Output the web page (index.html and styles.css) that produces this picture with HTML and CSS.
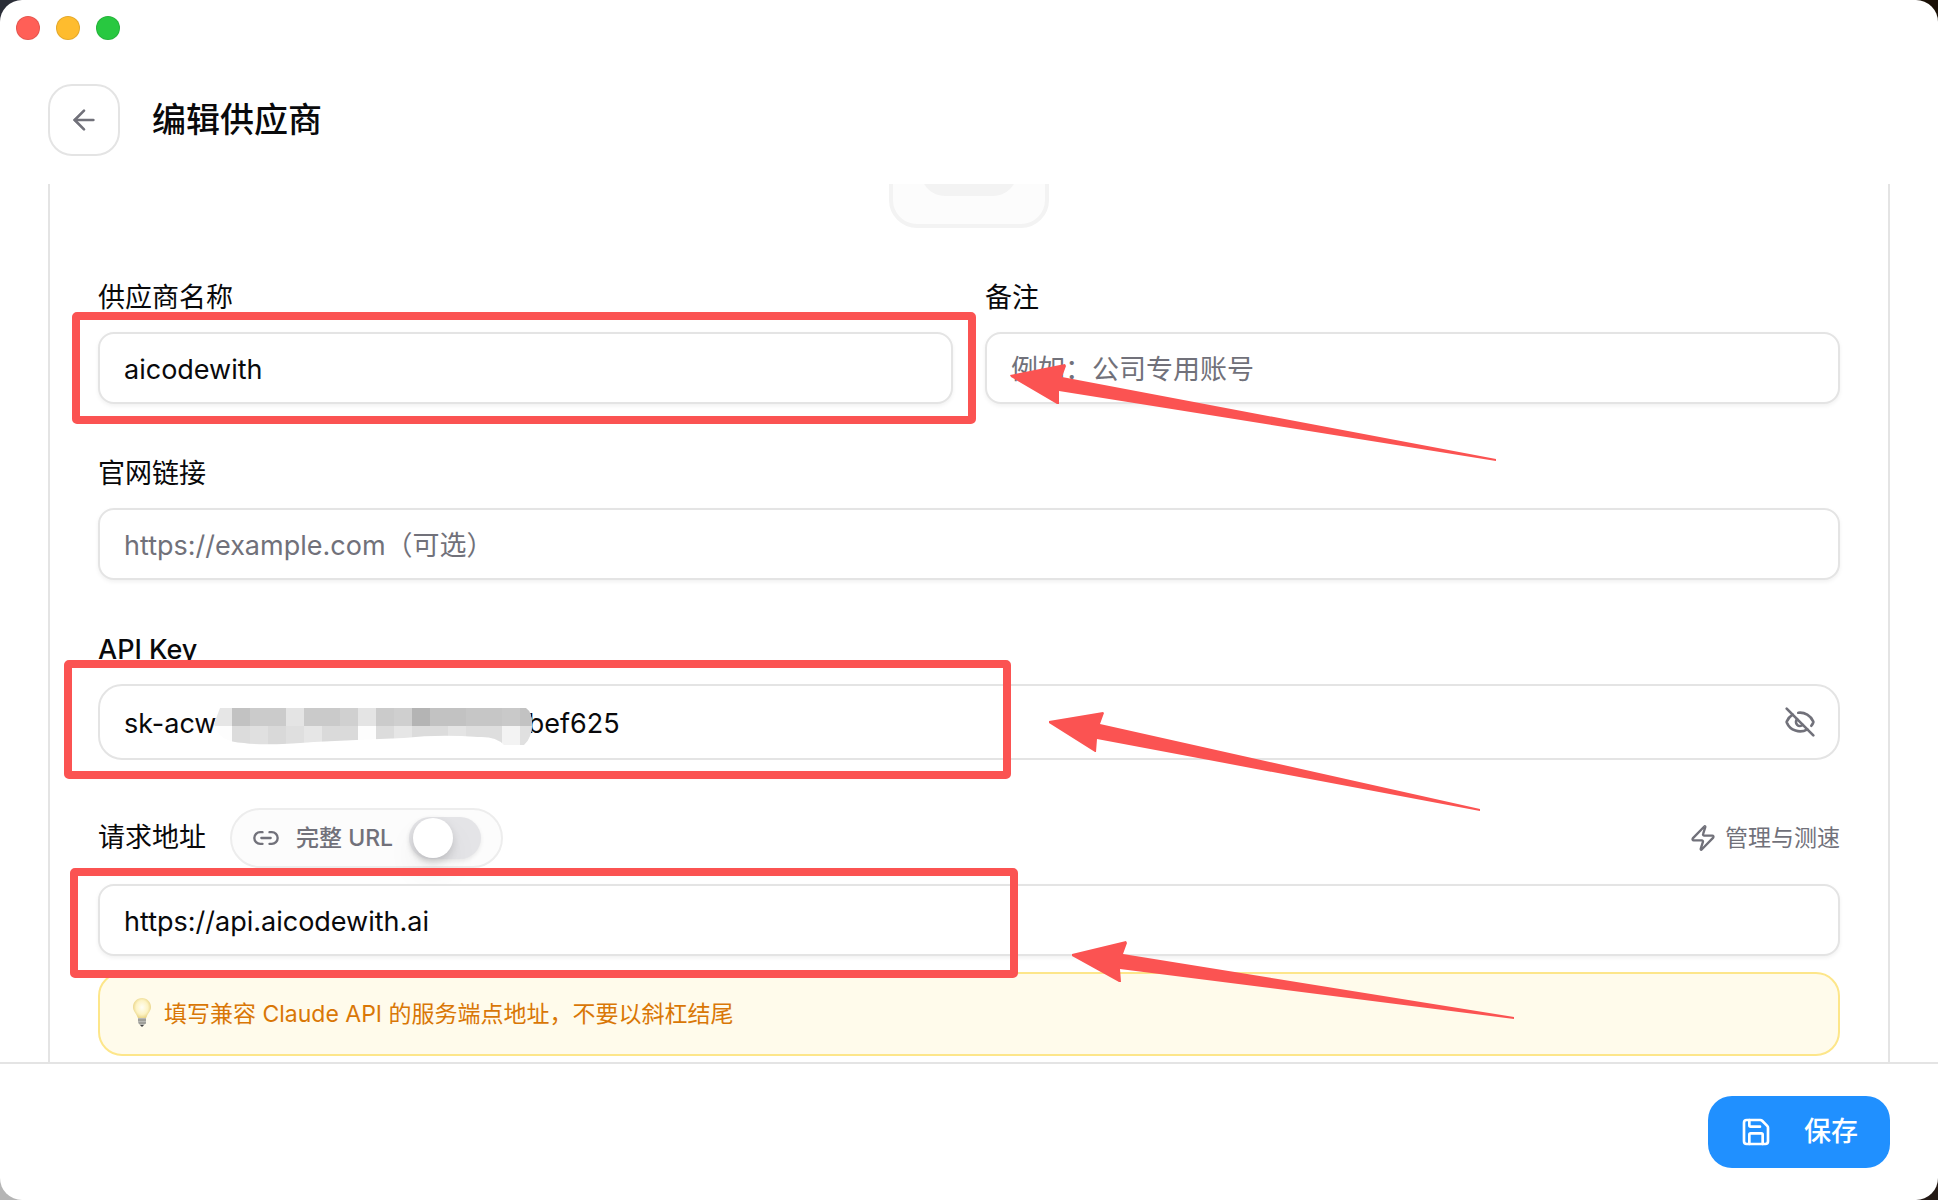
FILE: index.html
```html
<!DOCTYPE html>
<html lang="zh-CN">
<head>
    <meta charset="UTF-8">
    <title>编辑供应商</title>
    <meta name="viewport" content="width=device-width, initial-scale=1">
    <link rel="stylesheet" href="styles.css">
</head>
<body>
<div class="window">
    <div class="titlebar">
        <span class="dot dot-close"></span>
        <span class="dot dot-min"></span>
        <span class="dot dot-max"></span>
    </div>

    <header class="header">
        <button type="button" class="back" aria-label="返回">
            <svg class="icon" viewBox="0 0 24 24"><path d="m12 19-7-7 7-7"/><path d="M19 12H5"/></svg>
        </button>
        <h1>编辑供应商</h1>
    </header>

    <main class="content">
        <form class="panel" id="providerForm">
            <div class="avatar"><div class="avatar-inner"></div></div>

            <div class="columns">
                <div class="field">
                    <label for="name">供应商名称</label>
                    <input type="text" id="name" value="aicodewith">
                </div>
                <div class="field">
                    <label for="note">备注</label>
                    <input type="text" id="note" placeholder="例如：公司专用账号">
                </div>
            </div>

            <div class="field">
                <label for="site">官网链接</label>
                <input type="text" id="site" placeholder="https://example.com（可选）">
            </div>

            <div class="field">
                <label for="apiKey" class="label-latin">API Key</label>
                <div class="key-box">
                    <input type="text" id="apiKey" class="key-input" value="sk-acw                                         bef625">
                    <!-- blurred middle part of the key -->
                    <svg class="mosaic" viewBox="0 0 322 38" width="322" height="38">
                        <clipPath id="brush"><path d="M6 0H312Q318 4 318 16Q318 30 310 37H290Q282 28 264 29Q225 26 190 30Q140 32 100 34Q50 38 30 35Q4 34 0 16Z"/></clipPath>
                        <g clip-path="url(#brush)" shape-rendering="crispEdges">
                            <rect width="322" height="38" fill="#fdfdfd"/>
                            <rect x="0" width="18" height="18" fill="#e6e6e6"/>
                            <rect x="18" width="18" height="18" fill="#c2c2c2"/>
                            <rect x="36" width="36" height="18" fill="#cbcbcb"/>
                            <rect x="72" width="18" height="18" fill="#e4e4e4"/>
                            <rect x="90" width="36" height="18" fill="#cacaca"/>
                            <rect x="126" width="18" height="18" fill="#d0d0d0"/>
                            <rect x="144" width="18" height="18" fill="#e4e4e4"/>
                            <rect x="162" width="18" height="18" fill="#cbcbcb"/>
                            <rect x="180" width="18" height="18" fill="#cfcfcf"/>
                            <rect x="198" width="18" height="18" fill="#b4b4b4"/>
                            <rect x="216" width="36" height="18" fill="#c2c2c2"/>
                            <rect x="252" width="36" height="18" fill="#c6c6c6"/>
                            <rect x="288" width="18" height="18" fill="#c9c9c9"/>
                            <rect x="306" width="16" height="18" fill="#c2c2c2"/>
                            <rect x="18" y="18" width="18" height="20" fill="#dcdcdc"/>
                            <rect x="36" y="18" width="18" height="20" fill="#e0e0e0"/>
                            <rect x="54" y="18" width="18" height="20" fill="#d9d9d9"/>
                            <rect x="72" y="18" width="18" height="20" fill="#dfdfdf"/>
                            <rect x="90" y="18" width="18" height="20" fill="#e6e6e6"/>
                            <rect x="108" y="18" width="36" height="20" fill="#dadada"/>
                            <rect x="162" y="18" width="18" height="20" fill="#dcdcdc"/>
                            <rect x="180" y="18" width="18" height="20" fill="#e6e6e6"/>
                            <rect x="198" y="18" width="36" height="20" fill="#dcdcdc"/>
                            <rect x="234" y="18" width="18" height="20" fill="#e4e4e4"/>
                            <rect x="252" y="18" width="36" height="20" fill="#dedede"/>
                            <rect x="288" y="18" width="18" height="20" fill="#f3f3f3"/>
                            <rect x="306" y="18" width="16" height="20" fill="#e0e0e0"/>
                        </g>
                    </svg>
                    <button type="button" class="eye" aria-label="显示或隐藏 API Key">
                        <svg class="icon" viewBox="0 0 24 24"><path d="M10.733 5.076a10.744 10.744 0 0 1 11.205 6.575 1 1 0 0 1 0 .696 10.747 10.747 0 0 1-1.444 2.49"/><path d="M14.084 14.158a3 3 0 0 1-4.242-4.242"/><path d="M17.479 17.499a10.75 10.75 0 0 1-15.417-5.151 1 1 0 0 1 0-.696 10.75 10.75 0 0 1 4.446-5.143"/><path d="m2 2 20 20"/></svg>
                    </button>
                </div>
            </div>

            <div class="field field-url">
                <div class="url-row">
                    <label for="baseUrl">请求地址</label>
                    <label class="pill" for="fullUrl">
                        <svg class="icon icon-sm" viewBox="0 0 24 24"><path d="M9 17H7A5 5 0 0 1 7 7h2"/><path d="M15 7h2a5 5 0 1 1 0 10h-2"/><path d="M8 12h8"/></svg>
                        <span>完整 URL</span>
                        <input type="checkbox" id="fullUrl" class="switch">
                    </label>
                    <button type="button" class="speed">
                        <svg class="icon icon-sm" viewBox="0 0 24 24"><path d="M4 14a1 1 0 0 1-.78-1.63l9.9-10.2a.5.5 0 0 1 .86.46l-1.92 6.02A1 1 0 0 0 13 10h7a1 1 0 0 1 .78 1.63l-9.9 10.2a.5.5 0 0 1-.86-.46l1.92-6.02A1 1 0 0 0 11 14z"/></svg>
                        <span>管理与测速</span>
                    </button>
                </div>
                <input type="text" id="baseUrl" value="https://api.aicodewith.ai">
                <div class="hint">
                    <svg class="bulb" viewBox="0 0 20 30" width="20" height="30">
                        <defs>
                            <radialGradient id="glass" cx="50%" cy="45%" r="55%">
                                <stop offset="0" stop-color="#fffef4"/>
                                <stop offset="0.6" stop-color="#fdf3c4"/>
                                <stop offset="1" stop-color="#e6cf7c"/>
                            </radialGradient>
                        </defs>
                        <path d="M10 1C5 1 1 5 1 10c0 4 3 6 4 9 1 2 1 3 2 3h6c1 0 1-1 2-3 1-3 4-5 4-9 0-5-4-9-9-9z" fill="url(#glass)"/>
                        <path d="M6 21h8v5l-2 2-2 1-2-1-2-2z" fill="#b9b9b5"/>
                        <path d="M6 23h8M7 26h7" stroke="#85857f"/>
                        <path d="M8 28h4l-2 2z" fill="#444"/>
                    </svg>
                    <p>填写兼容 Claude API 的服务端点地址，不要以斜杠结尾</p>
                </div>
            </div>
        </form>
    </main>

    <footer class="footer">
        <button type="submit" form="providerForm" class="save">
            <svg class="icon" viewBox="0 0 24 24"><path d="M15.2 3a2 2 0 0 1 1.4.6l3.8 3.8a2 2 0 0 1 .6 1.4V19a2 2 0 0 1-2 2H5a2 2 0 0 1-2-2V5a2 2 0 0 1 2-2z"/><path d="M17 21v-7a1 1 0 0 0-1-1H8a1 1 0 0 0-1 1v7"/><path d="M7 3v4a1 1 0 0 0 1 1h7"/></svg>
            <span>保存</span>
        </button>
    </footer>
</div>

<!-- red frames and arrows drawn over the form -->
<svg class="marks" viewBox="0 0 1938 1200" preserveAspectRatio="xMidYMin meet">
    <rect x="76" y="316" width="896" height="104" rx="1"/>
    <rect x="68" y="664" width="939" height="111" rx="1"/>
    <rect x="74" y="872" width="940" height="102" rx="1"/>
    <path d="M1010 375 1065 364 1066 366 1062 377 1496 459V461L1059 391V404H1057L1011 377Z"/>
    <path d="M1049 721 1103 712 1104 713 1100 724 1480 809V811L1097 739 1096 752H1095L1049 723Z"/>
    <path d="M1072 954 1126 941 1127 943 1123 954 1514 1017V1019L1120 969 1121 982H1119L1072 956Z"/>
</svg>
</body>
</html>
```
FILE: styles.css
```css
* {
    box-sizing: border-box;
}

body {
    margin: 0;
    font-family: Inter, "Noto Sans CJK SC", sans-serif;
    font-size: 27px;
    color: #09090b;
    /* desktop showing behind the rounded corners */
    background-image: linear-gradient(#2b2e38, #2b2e38), linear-gradient(#1a1006, #1a1006), linear-gradient(#b5b5b5, #b5b5b5), linear-gradient(#241a16, #241a16);
    background-size: 50% 50%;
    background-position: 0 0, 100% 0, 0 100%, 100% 100%;
    background-repeat: no-repeat;
}

.window {
    display: flex;
    flex-direction: column;
    height: 100vh;
    background-color: #fff;
    border-radius: 22px;
    overflow: hidden;
}

.titlebar {
    display: flex;
    gap: 16px;
    height: 84px;
    padding: 16px;
    flex-shrink: 0;
}

.dot {
    width: 24px;
    height: 24px;
    border-radius: 50%;
    border: 1px solid rgba(0, 0, 0, 0.1);
}

.dot-close {
    background-color: #ff5f57;
}

.dot-min {
    background-color: #febc2e;
}

.dot-max {
    background-color: #28c840;
}

.header {
    display: flex;
    align-items: center;
    gap: 32px;
    padding: 0 48px 28px;
    flex-shrink: 0;
}

h1 {
    margin: 0;
    font-size: 34px;
    font-weight: 500;
    line-height: 48px;
}

button {
    font: inherit;
    color: inherit;
    padding: 0;
    border: 0;
    background: none;
    cursor: pointer;
}

.icon {
    display: block;
    width: 32px;
    height: 32px;
    flex-shrink: 0;
    fill: none;
    stroke: currentColor;
    stroke-width: 2;
    stroke-linecap: round;
    stroke-linejoin: round;
}

.icon-sm {
    width: 28px;
    height: 28px;
}

.back {
    display: flex;
    align-items: center;
    justify-content: center;
    width: 72px;
    height: 72px;
    color: #71717a;
    border: 2px solid #e4e4e4;
    border-radius: 24px;
}

.content {
    flex: 1;
    min-height: 0;
    padding: 0 48px;
    overflow-y: auto;
    scrollbar-width: none;
}

/* the form is scrolled down, its top is out of view */
.panel {
    display: flex;
    flex-direction: column;
    gap: 48px;
    margin-top: -116px;
    padding: 0 48px 48px;
    border: 2px solid #e4e4e4;
    border-top: 0;
}

.avatar {
    align-self: center;
    padding: 28px;
    border: 4px solid #f3f3f3;
    border-radius: 28px;
    background-color: #fcfcfc;
}

.avatar-inner {
    width: 96px;
    height: 96px;
    border-radius: 24px;
    background-color: #f3f3f3;
}

.columns {
    display: grid;
    grid-template-columns: 1fr 1fr;
    gap: 32px;
}

.field {
    display: flex;
    flex-direction: column;
    gap: 12px;
}

.field-url {
    gap: 16px;
}

label {
    line-height: 44px;
}

.label-latin {
    font-weight: 500;
}

input[type="text"] {
    width: 100%;
    height: 72px;
    padding: 2px 24px 0;
    font: inherit;
    color: inherit;
    background-color: #fff;
    border: 2px solid #e4e4e4;
    border-radius: 16px;
    box-shadow: 0 2px 4px rgba(0, 0, 0, 0.06);
    outline: none;
}

input::placeholder {
    color: #71717a;
    opacity: 1;
}

.key-box {
    position: relative;
}

.key-box .key-input {
    display: block;
    height: 76px;
    padding-right: 80px;
    border-radius: 24px;
    box-shadow: none;
}

.mosaic {
    position: absolute;
    left: 116px;
    top: 24px;
}

.eye {
    position: absolute;
    right: 24px;
    top: 22px;
    color: #71717a;
}

.url-row {
    display: flex;
    align-items: center;
    gap: 24px;
}

.pill {
    display: flex;
    align-items: center;
    gap: 16px;
    height: 60px;
    padding: 0 20px;
    font-size: 23px;
    font-weight: 500;
    color: #71717a;
    background-color: #fcfcfc;
    border: 2px solid #ededed;
    border-radius: 30px;
}

.switch {
    appearance: none;
    display: flex;
    align-items: center;
    width: 72px;
    height: 42px;
    margin: 0;
    padding: 0 4px;
    border-radius: 21px;
    background-color: #e4e4e7;
    box-shadow: 0 2px 4px rgba(0, 0, 0, 0.08);
}

.switch::before {
    content: "";
    width: 40px;
    height: 40px;
    border-radius: 50%;
    background-color: #fff;
    box-shadow: 0 4px 8px rgba(0, 0, 0, 0.14), 0 16px 32px rgba(0, 0, 0, 0.06);
}

.switch:checked {
    justify-content: flex-end;
    background-color: #2090ff;
}

.speed {
    display: flex;
    align-items: center;
    gap: 8px;
    margin-left: auto;
    font-size: 23px;
    line-height: 28px;
    color: #71717a;
}

.hint {
    display: flex;
    align-items: center;
    gap: 12px;
    height: 84px;
    padding: 0 32px 4px;
    font-size: 23px;
    color: #d97706;
    background-color: #fffbeb;
    border: 2px solid #fde68a;
    border-radius: 24px;
}

.hint p {
    margin: 0;
}

.footer {
    display: flex;
    justify-content: flex-end;
    padding: 32px 48px;
    border-top: 2px solid #e4e4e4;
    flex-shrink: 0;
}

.save {
    display: flex;
    align-items: center;
    gap: 32px;
    height: 72px;
    padding: 0 32px;
    font-weight: 500;
    line-height: 32px;
    color: #fff;
    background-color: #2090ff;
    border-radius: 24px;
}

.marks {
    position: absolute;
    top: 0;
    left: 0;
    width: 100%;
    pointer-events: none;
}

.marks rect {
    fill: none;
    stroke: #fb5352;
    stroke-width: 8;
    stroke-linejoin: round;
}

.marks path {
    fill: #fb5352;
}
```
